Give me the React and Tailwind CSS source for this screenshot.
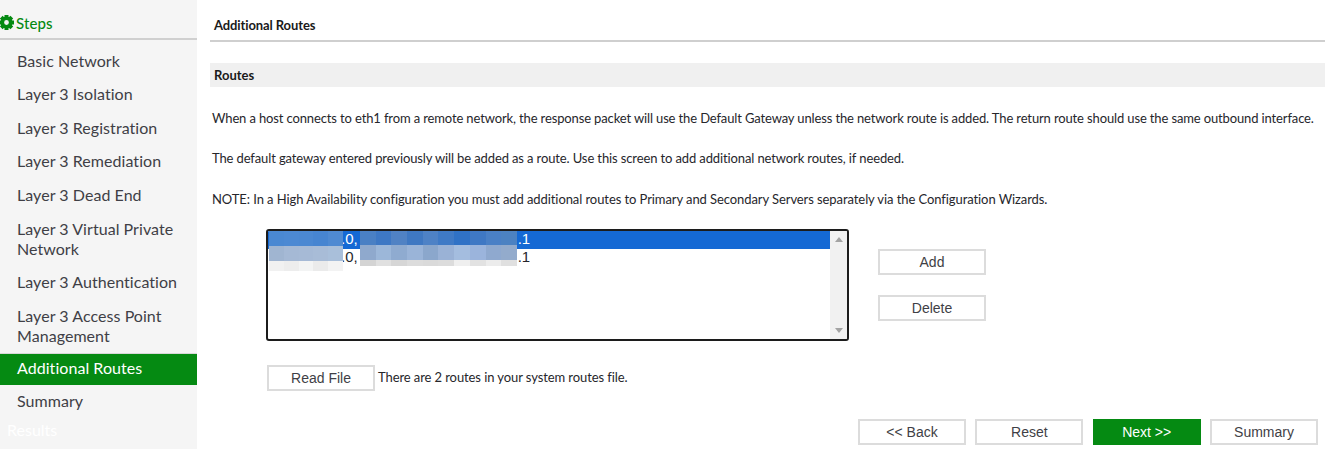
const steps = ["Basic Network", "Layer 3 Isolation", "Layer 3 Registration", "Layer 3 Remediation", "Layer 3 Dead End"];

function Gear() {
  const teeth = [0, 45, 90, 135, 180, 225, 270, 315];
  return (
    <svg width="15" height="15" viewBox="0 0 15 15" className="shrink-0 ml-[-1px]">
      {teeth.map((a) => (
        <rect key={a} x="5.5" y="0" width="4" height="3.5" fill="#058a12" transform={`rotate(${a} 7.5 7.5)`} />
      ))}
      <circle cx="7.5" cy="7.5" r="4.2" fill="none" stroke="#058a12" strokeWidth="3.6" />
    </svg>
  );
}

function Step({ children, active }) {
  return (
    <div
      className={
        active
          ? "bg-[#058a12] text-white pl-[17px] h-[32px] pb-[2px] flex items-center border-t border-[#d8d8d8] text-[16px] leading-[20px] tracking-[0.05px]"
          : "text-[#3f3f46] pl-[17px] text-[16px] leading-[20px] py-[6.8px] tracking-[0.05px]"
      }
    >
      {children}
    </div>
  );
}

function Btn({ children, primary }) {
  return (
    <button
      className={
        "w-[108px] h-[26px] pb-[1px] border-2 text-[14px] leading-none font-['Liberation_Sans',Arial,sans-serif] " +
        (primary ? "bg-[#058a12] border-[#058a12] text-white" : "bg-white border-[#dcdcdc] text-[#3f3f46]")
      }
    >
      {children}
    </button>
  );
}

const mosaicA = [
  ["#4a88d2", "#4c89d3", "#4b88d2", "#4785d1", "#4f8ad2"],
  ["#a0b5d1", "#a5b9d5", "#a6bad6", "#a8bcd7", "#a9bfda"],
  ["#f1f1f1", "#ededed", "#f3f4f4", "#ebebeb", "#f3f3f3"],
];
const mosaicB = [
  ["#4a80c4", "#3e78c4", "#5082c4", "#3f78c2", "#4e82c6", "#3f7ac6", "#3072c6", "#3f78c4", "#4a80c6", "#4c82c2"],
  ["#8fa9cd", "#9cb7d9", "#8fabd0", "#9ab4d8", "#8ba7cc", "#9ab2d6", "#a4bddf", "#9bb4dc", "#8fa9cf", "#93abcc"],
  ["#d4d4d4", "#e0e0e0", "#d6d6d6", "#dcdcdc", "#dadada", "#dcdcdc", "#efefef", "#e2e2e2", "#ececec", "#e0e0e0"],
];

function Mosaic({ rows, h3, cell }) {
  return (
    <div className="flex flex-col">
      {rows.map((r, i) => (
        <div key={i} className={i === 2 ? h3 + " flex" : "h-[15px] flex"}>
          {r.map((c, j) => (
            <div key={j} className={cell + " h-full"} style={{ background: c }} />
          ))}
        </div>
      ))}
    </div>
  );
}

export default function App() {
  return (
    <div className="w-[1328px] h-[449px] flex overflow-hidden bg-white font-['Lato','Noto_Sans',sans-serif]">
      <aside className="w-[197px] shrink-0 bg-[#f5f5f5] flex flex-col">
        <div className="h-[40px] pt-[15px] border-b-2 border-[#d0d0d0] flex items-start gap-[2px] text-[#058a12] text-[15px] font-medium leading-[16px] tracking-[0.1px]">
          <Gear />
          <span>Steps</span>
        </div>
        <div className="pt-[3.9px] flex flex-col">
          {steps.map((s) => (
            <Step key={s}>{s}</Step>
          ))}
          <Step>Layer 3 Virtual Private<br />Network</Step>
          <Step>Layer 3 Authentication</Step>
          <Step>Layer 3 Access Point<br />Management</Step>
          <Step active>Additional Routes</Step>
          <Step>Summary</Step>
        </div>
        <div className="pl-[7px] mt-[1.7px] text-white text-[16px] leading-[20px]">Results</div>
      </aside>

      <main className="w-[1131px] flex flex-col">
        <div className="ml-[13px] mr-[3px] h-[42px] pt-[17px] border-b-2 border-[#cfcfcf] pl-[4px] text-[13px] font-bold leading-[16px] text-[#1a1a1a] tracking-[-0.1px]">
          Additional Routes
        </div>
        <div className="ml-[13px] mr-[3px] mt-[21px] h-[24px] pt-[1px] bg-[#f0f0f0] pl-[4px] flex items-center text-[13px] font-bold text-[#1a1a1a]">
          Routes
        </div>
        <div className="pl-[15px] text-[13px] leading-[16px] text-[#26262b] whitespace-nowrap flex flex-col gap-[24px] mt-[23px]">
          <p className="tracking-[-0.132px]">When a host connects to eth1 from a remote network, the response packet will use the Default Gateway unless the network route is added. The return route should use the same outbound interface.</p>
          <p className="tracking-[-0.12px]">The default gateway entered previously will be added as a route. Use this screen to add additional network routes, if needed.</p>
          <p className="tracking-[-0.08px] mt-[1px]">NOTE: In a High Availability configuration you must add additional routes to Primary and Secondary Servers separately via the Configuration Wizards.</p>
        </div>

        <div className="flex ml-[69px] mt-[22px]">
          <div className="relative w-[583px] h-[112px] border-2 border-[#1c1c1c] rounded-[3px] flex overflow-hidden font-['Liberation_Sans',Arial,sans-serif] text-[15px] leading-[14px]">
            <div className="flex-1">
              <div className="h-[18px] bg-[#1569d4] text-white pl-[73px] pt-[1px] flex">
                <span>.0,</span>
                <span className="ml-[160px]">.1</span>
              </div>
              <div className="h-[18px] text-[#26262b] pl-[73px] pt-[1px] flex">
                <span>.0,</span>
                <span className="ml-[160px]">.1</span>
              </div>
            </div>
            <div className="w-[17px] bg-[#f1f1f1] flex flex-col items-center justify-between py-[6px]">
              <div className="w-0 h-0 border-x-[4px] border-x-transparent border-b-[5px] border-b-[#a3a3a3]" />
              <div className="w-0 h-0 border-x-[4px] border-x-transparent border-t-[5px] border-t-[#a3a3a3]" />
            </div>
            <div className="absolute left-[1px] top-0"><Mosaic rows={mosaicA} h3="h-[10px]" cell="w-[14.8px]" /></div>
            <div className="absolute left-[92px] top-[-1px]"><Mosaic rows={mosaicB} h3="h-[6px]" cell="w-[15.7px]" /></div>
          </div>
          <div className="ml-[29px] pt-[20px] flex flex-col gap-[20px]">
            <Btn>Add</Btn>
            <Btn>Delete</Btn>
          </div>
        </div>

        <div className="flex items-center ml-[70px] mt-[24px]">
          <Btn>Read File</Btn>
          <span className="ml-[3px] text-[13px] tracking-[-0.09px] text-[#26262b]">There are 2 routes in your system routes file.</span>
        </div>

        <div className="flex justify-end gap-[9.33px] mr-[10px] mt-[28px]">
          <Btn>&lt;&lt; Back</Btn>
          <Btn>Reset</Btn>
          <Btn primary>Next &gt;&gt;</Btn>
          <Btn>Summary</Btn>
        </div>
      </main>
    </div>
  );
}
